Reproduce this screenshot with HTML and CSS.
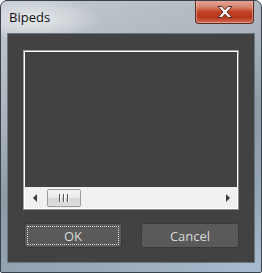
FILE: index.html
```html
<!DOCTYPE html>
<html>
<head>
<meta charset="utf-8">
<link rel="stylesheet" href="styles.css">
</head>
<body>
<div class="window">
  <div class="titlebar">
    <span class="title">Bipeds</span>
    <div class="close">
      <svg width="22" height="14" viewBox="0 0 22 14">
        <path d="M4 1.5h4l3 3.2 3-3.2h4l-5 5.5 5 5.5h-4l-3-3.2-3 3.2H4l5-5.5z" fill="#f4f4f4" stroke="#5a2a22" stroke-width="1" stroke-linejoin="round"/>
      </svg>
    </div>
  </div>
  <div class="client">
    <div class="listbox">
      <div class="listarea"></div>
      <div class="hscroll">
        <span class="arrow left"></span>
        <div class="track">
          <div class="thumb"><i></i><i></i><i></i></div>
        </div>
        <span class="arrow right"></span>
      </div>
    </div>
    <div class="buttons">
      <button class="btn focus"><span>OK</span></button>
      <button class="btn"><span>Cancel</span></button>
    </div>
  </div>
</div>
</body>
</html>
```
FILE: styles.css
```css
html, body {
  margin: 0;
  padding: 0;
  background: #ffffff;
}
.window {
  width: 262px;
  height: 273px;
  box-sizing: border-box;
  border: 1px solid #38424c;
  border-radius: 7px 7px 2px 2px;
  background:
    radial-gradient(ellipse 70px 22px at 32px 18px, rgba(235,238,240,0.9), rgba(235,238,240,0) 100%),
    linear-gradient(160deg, #c4cad0 0%, #a9b2bb 35%, #8d99a5 55%, #97a7b7 80%, #a9bdd1 100%);
  display: flex;
  flex-direction: column;
  font-family: "Open Sans", "DejaVu Sans", sans-serif;
  overflow: hidden;
}
.titlebar {
  height: 33px;
  display: flex;
  justify-content: space-between;
  align-items: flex-start;
}
.title {
  font-family: "Open Sans", sans-serif;
  font-size: 13px;
  color: #111;
  margin: 7px 0 0 8px;
  line-height: 18px;
}
.close {
  width: 59px;
  height: 24px;
  margin: -1px 7px 0 0;
  box-sizing: border-box;
  border: 1px solid #5b2a22;
  border-top: none;
  border-radius: 0 0 4px 4px;
  background: linear-gradient(#e8a898 0%, #d88570 30%, #c24427 50%, #b5361c 75%, #d0705a 100%);
  box-shadow: inset 0 0 0 1px rgba(255,210,200,0.45);
  display: flex;
  align-items: center;
  justify-content: center;
}
.close svg {
  display: block;
}
.client {
  flex: 1;
  margin: 0 7px 10px 7px;
  background: #424242;
  box-shadow: 0 0 0 1px #6e7780;
  padding: 16px 15px 14px 15px;
  display: flex;
  flex-direction: column;
}
.listbox {
  height: 160px;
  box-sizing: border-box;
  border: 1px solid;
  border-color: #a0a0a0 #8a8a8a #8a8a8a #a0a0a0;
  display: flex;
  flex-direction: column;
}
.listarea {
  flex: 1;
  border: 1px solid #ffffff;
  border-bottom: none;
  background: #424242;
}
.hscroll {
  height: 21px;
  border: 1px solid #ffffff;
  border-top: none;
  background: #f0f0f0;
  display: flex;
  align-items: center;
}
.arrow {
  width: 0;
  height: 0;
  border-top: 4px solid transparent;
  border-bottom: 4px solid transparent;
}
.arrow.left {
  border-right: 4px solid #3a3a3a;
  margin: 0 7px 0 8px;
}
.arrow.right {
  border-left: 4px solid #3a3a3a;
  margin: 0 7px 0 6px;
}
.track {
  flex: 1;
  height: 100%;
  display: flex;
  align-items: center;
}
.thumb {
  width: 34px;
  height: 18px;
  margin-left: 3px;
  box-sizing: border-box;
  border: 1px solid #9a9a9a;
  border-radius: 2px;
  background: linear-gradient(#f6f6f6 0%, #e8e8e8 50%, #d6d6d6 51%, #dcdcdc 100%);
  display: flex;
  justify-content: center;
  align-items: center;
  gap: 2px;
}
.thumb i {
  width: 1px;
  height: 8px;
  background: #555;
  border-right: 1px solid #fff;
}
.buttons {
  margin-top: 13px;
  display: flex;
  justify-content: space-between;
  padding-left: 1px;
}
.btn {
  width: 98px;
  height: 25px;
  box-sizing: border-box;
  border: 1px solid #3a3a3a;
  border-radius: 3px;
  background: #5a5a5a;
  color: #d9d9d9;
  font-family: "Open Sans", sans-serif;
  font-size: 13px;
  padding: 2px;
  margin: 0;
  display: flex;
}
.btn span {
  flex: 1;
  display: flex;
  align-items: center;
  justify-content: center;
  border: 1px dotted transparent;
}
.btn.focus span {
  border-color: #e0e0e0;
}
```
